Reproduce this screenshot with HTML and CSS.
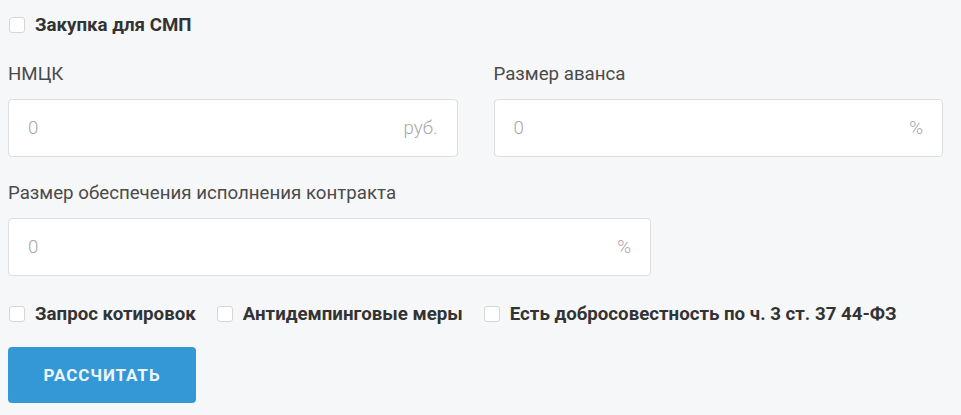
FILE: index.html
```html
<!DOCTYPE html>
<html lang="ru">
<head>
  <meta charset="UTF-8" />
  <meta name="viewport" content="width=device-width, initial-scale=1.0" />
  <title>Калькулятор обеспечения</title>
  <link rel="stylesheet" href="styles.css">
</head>
<body>
  <form class="calc">
    <!-- СМП -->
    <label class="check">
      <input type="checkbox" class="check-box">
      <span>Закупка для СМП</span>
    </label>

    <div class="row">
      <div class="field">
        <div class="field-label">НМЦК</div>
        <div class="input-wrap">
          <input type="text" placeholder="0">
          <span class="suffix">руб.</span>
        </div>
      </div>
      <div class="field">
        <div class="field-label">Размер аванса</div>
        <div class="input-wrap">
          <input type="text" placeholder="0">
          <span class="suffix">%</span>
        </div>
      </div>
    </div>

    <div class="field field-wide">
      <div class="field-label">Размер обеспечения исполнения контракта</div>
      <div class="input-wrap">
        <input type="text" placeholder="0">
        <span class="suffix">%</span>
      </div>
    </div>

    <!-- Options -->
    <div class="options">
      <label class="check">
        <input type="checkbox" class="check-box">
        <span>Запрос котировок</span>
      </label>
      <label class="check">
        <input type="checkbox" class="check-box">
        <span>Антидемпинговые меры</span>
      </label>
      <label class="check">
        <input type="checkbox" class="check-box">
        <span>Есть добросовестность по ч. 3 ст. 37 44-ФЗ</span>
      </label>
    </div>

    <button type="button" class="btn">Рассчитать</button>
  </form>
</body>
</html>
```

FILE: styles.css
```css
* {
  margin: 0;
  padding: 0;
  box-sizing: border-box;
}
body {
  font-family: Roboto, "Liberation Sans", Arial, sans-serif;
  background: #f6f7f9;
  color: #444;
  padding: 14px 8px 0;
}
.calc {
  width: 935px;
}
/* Checkboxes */
.check {
  display: inline-flex;
  align-items: center;
  gap: 10px;
  font-size: 18.7px;
  line-height: 22px;
  font-weight: 700;
  color: #333;
  cursor: pointer;
}
.check-box {
  appearance: none;
  -webkit-appearance: none;
  flex: none;
  width: 16px;
  height: 16px;
  margin-left: 1px;
  background: #fff;
  border: 1px solid #d6d6d6;
  border-radius: 3px;
}
/* Fields */
.row {
  display: grid;
  grid-template-columns: 1fr 1fr;
  gap: 36px;
  margin-top: 26px;
}
.field-wide {
  width: 643px;
  margin-top: 25px;
}
.field-label {
  font-size: 18.7px;
  line-height: 22px;
  color: #4a4a4a;
  margin-bottom: 14px;
}
.input-wrap {
  display: flex;
  align-items: center;
  height: 58px;
  padding: 0 19px;
  background: #fff;
  border: 1px solid #dedede;
  border-radius: 4px;
}
.input-wrap input {
  flex: 1;
  min-width: 0;
  border: none;
  outline: none;
  background: transparent;
  font-family: inherit;
  font-size: 18.7px;
  font-weight: 300;
  color: #333;
}
.input-wrap input::placeholder {
  color: #a8a8a8;
}
.suffix {
  font-size: 18.7px;
  font-weight: 300;
  color: #a8a8a8;
}
/* Options row */
.options {
  display: flex;
  gap: 20px;
  margin-top: 27px;
}
/* Button */
.btn {
  display: block;
  margin-top: 22px;
  width: 188px;
  height: 56px;
  border: none;
  border-radius: 4px;
  background: #3598d6;
  color: #eef6fc;
  font-family: inherit;
  font-size: 17px;
  font-weight: 700;
  letter-spacing: 0.9px;
  text-transform: uppercase;
  cursor: pointer;
}
```
